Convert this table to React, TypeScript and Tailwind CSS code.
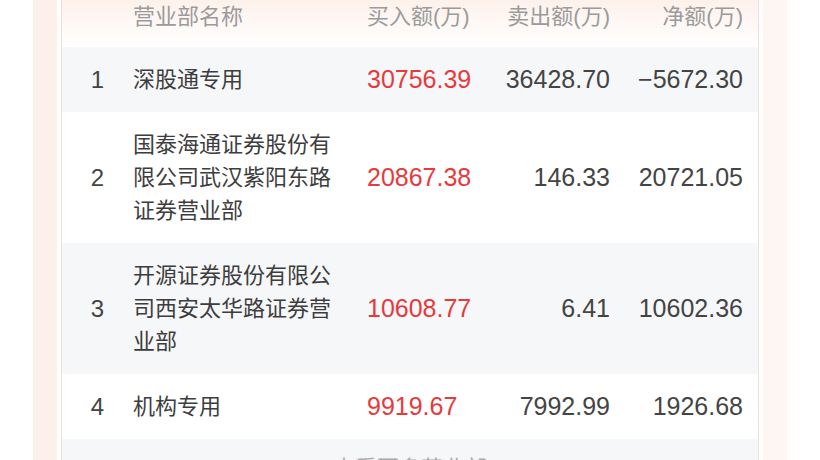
import React from "react";

type Row = {
  rank: number;
  name: string;
  buy: string;
  sell: string;
  net: string;
};

const rows: Row[] = [
  { rank: 1, name: "深股通专用", buy: "30756.39", sell: "36428.70", net: "−5672.30" },
  { rank: 2, name: "国泰海通证券股份有限公司武汉紫阳东路证券营业部", buy: "20867.38", sell: "146.33", net: "20721.05" },
  { rank: 3, name: "开源证券股份有限公司西安太华路证券营业部", buy: "10608.77", sell: "6.41", net: "10602.36" },
  { rank: 4, name: "机构专用", buy: "9919.67", sell: "7992.99", net: "1926.68" }
];

const font = { fontFamily: '"Liberation Sans", "Noto Sans CJK SC", sans-serif' };

function TableRow({ row, striped }: { row: Row; striped: boolean }): React.ReactElement {
  return (
    <div className={`flex items-center py-4 leading-[33px] ${striped ? "bg-[#f6f7f9]" : "bg-white"}`}>
      <div className="w-[71px] text-center text-[24px] text-[#444]">{row.rank}</div>
      <div className="w-[204px] text-[22px] text-[#3d3d3d]">{row.name}</div>
      <div className="ml-[30px] w-[120px] text-[25px] text-[#e8393c]">{row.buy}</div>
      <div className="w-[123px] text-right text-[25px] text-[#444]">{row.sell}</div>
      <div className="w-[133px] text-right text-[25px] text-[#444]">{row.net}</div>
    </div>
  );
}

export default function App(): React.ReactElement {
  return (
    <div className="h-[460px] w-[820px] overflow-hidden bg-white" style={font}>
      <div className="mx-auto h-full w-[754px] bg-gradient-to-r from-[#fdf0ea] via-[#fdeee7] to-[#fef6f2] px-[24px]">
        <div className="h-full bg-white px-[4px]">
          <div className="h-full border-x border-[#f7dcdc] bg-white">
            <div className="flex h-[47px] items-start bg-gradient-to-b from-[#fdf1eb] to-white text-[22px] leading-[33px] text-[#9b9b9b]">
              <div className="w-[71px]" />
              <div className="w-[204px]">营业部名称</div>
              <div className="ml-[30px] w-[120px]">买入额(万)</div>
              <div className="w-[123px] text-right">卖出额(万)</div>
              <div className="w-[133px] text-right">净额(万)</div>
            </div>
            {rows.map((row, i) => (
              <TableRow key={row.rank} row={row} striped={i % 2 === 0} />
            ))}
            <div className="bg-[#f6f7f9] pt-[13px] text-center text-[22px] leading-[33px] text-[#aaa]">
              查看更多营业部
            </div>
          </div>
        </div>
      </div>
    </div>
  );
}
